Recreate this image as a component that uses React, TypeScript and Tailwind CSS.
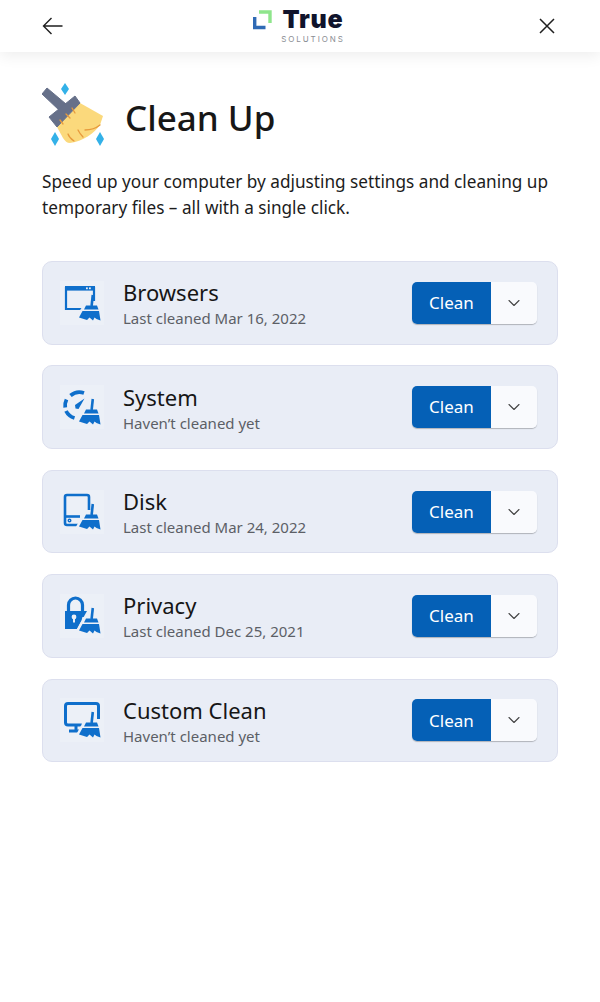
import React from "react";
import { ChevronDown } from "lucide-react";

const BLUE = "#0f6fcb";
const BG = "#ecf0f7";

function Broom() {
  const body = "M22.5 30 L39 30 L40.5 39.5 L36.5 38 L34.5 36.5 L33 39.5 L29.5 36.5 L27 39 L19 36.5 Z";
  return (
    <g>
      <path d={body} fill={BG} stroke={BG} strokeWidth="5" />
      <path d="M24 25 L38 25 L39 29 L23 29 Z" fill={BG} stroke={BG} strokeWidth="4" />
      <path d="M32.8 14 L31.6 25" stroke={BLUE} strokeWidth="2.6" />
      <path d="M26 24.5 L37 24.5 L38.5 28.5 L24 28.5 Z" fill={BLUE} />
      <path d={body} fill={BLUE} />
    </g>
  );
}

function CardIcon({ kind }: { kind: string }) {
  return (
    <svg width="44" height="44" viewBox="0 0 44 44" className="shrink-0">
      <rect width="44" height="44" fill={BG} />
      {kind === "browser" && (
        <g>
          <path d="M22 28 H6 V7 H34 V20" fill="none" stroke={BLUE} strokeWidth="2.2" />
          <rect x="5" y="5" width="30" height="4.6" fill={BLUE} />
          <rect x="26" y="6.4" width="1.8" height="1.8" fill={BG} />
          <rect x="29" y="6.4" width="1.8" height="1.8" fill={BG} />
        </g>
      )}
      {kind === "system" && (
        <g fill="none" stroke={BLUE} strokeWidth="3.8">
          <path d="M10.5 10.5 A14 14 0 0 1 24 8" />
          <path d="M6.5 14.5 A14 14 0 0 0 5.2 22.5" />
          <path d="M6 26 A14 14 0 0 0 14.5 33" />
          <path d="M15.5 23.5 L15 20 L24.5 13.5 L18.5 24 Z" fill={BLUE} stroke="none" />
        </g>
      )}
      {kind === "disk" && (
        <g fill="none" stroke={BLUE} strokeWidth="2.6">
          <path d="M22 35 H7 Q5 35 5 33 V7 Q5 5 7 5 H27 Q29 5 29 7 V20" />
          <path d="M5 26.5 H20" />
          <circle cx="9.5" cy="30.5" r="0.7" />
        </g>
      )}
      {kind === "privacy" && (
        <g>
          <path d="M8.5 18 V11 A7 7 0 0 1 22.5 11 V18" fill="none" stroke={BLUE} strokeWidth="3.2" />
          <path d="M5 17 H27 L17 35 H5 Z" fill={BLUE} />
          <circle cx="14" cy="23" r="2.4" fill={BG} />
          <path d="M13 24 H15 V28.5 H13 Z" fill={BG} />
        </g>
      )}
      {kind === "custom" && (
        <g fill="none" stroke={BLUE} strokeWidth="3">
          <path d="M22 27 H8 Q5.5 27 5.5 24.5 V8 Q5.5 5.5 8 5.5 H36 Q38.5 5.5 38.5 8 V21" />
          <path d="M9 33 H19 M16 27 V32" />
        </g>
      )}
      <Broom />
    </svg>
  );
}

function BroomHero() {
  return (
    <svg width="64" height="66" viewBox="0 0 64 66" className="shrink-0">
      <path d="M23 0 L27 6 L23 12 L19 6 Z" fill="#33b1e8" />
      <path d="M13 49 L17 56 L13 63 L9 56 Z" fill="#33b1e8" />
      <path d="M58 49 L62 56 L58 63 L54 56 Z" fill="#33b1e8" />
      <path d="M0 11 L5 5 L24 21 L18 28 Z" fill="#667089" stroke="#667089" strokeLinejoin="round" />
      <path d="M15 44 L38 20 L61 33 L58 42 C52 50 42 58 28 60 C25 60 23 58 21 55 Z" fill="#fbd97c" />
      <path d="M7 34 L33 13 L38 20 L15 44 Z" fill="#667089" stroke="#667089" strokeLinejoin="round" />
      <path d="M30 25 L33 30 M24 31 L28 35 M18 37 L21 41 M43 47 C48 47 53 46 58 42 M41 54 C39 52 38 51 36 47 M32 58 C29 56 27 54 26 51" stroke="#e79a3c" strokeWidth="1.3" fill="none" strokeLinecap="round" />
    </svg>
  );
}

function Logo() {
  return (
    <div className="flex items-start gap-[9px] pt-[8px] ml-[-4px]">
      <svg width="19" height="20" viewBox="0 0 19 20" className="mt-[2px]">
        <path d="M6 2 H17 V13" fill="none" stroke="#8fe58c" strokeWidth="3.4" />
        <path d="M1.7 7 V17.5 H12.5" fill="none" stroke="#2f6ab5" strokeWidth="3.4" />
      </svg>
      <div className="flex flex-col items-center">
        <span className="text-[25px] leading-[22px] font-black tracking-[0.8px] text-[#10142c]" style={{ fontFamily: '"Inter", sans-serif' }}>True</span>
        <span className="mt-[5px] text-[8px] leading-[8px] tracking-[1.9px] text-[#8a8d93]" style={{ fontFamily: '"Inter", sans-serif' }}>SOLUTIONS</span>
      </div>
    </div>
  );
}

const rows = [
  { kind: "browser", name: "Browsers", sub: "Last cleaned Mar 16, 2022" },
  { kind: "system", name: "System", sub: "Haven\u2019t cleaned yet" },
  { kind: "disk", name: "Disk", sub: "Last cleaned Mar 24, 2022" },
  { kind: "privacy", name: "Privacy", sub: "Last cleaned Dec 25, 2021" },
  { kind: "custom", name: "Custom Clean", sub: "Haven\u2019t cleaned yet" },
];

export default function App() {
  return (
    <div className="w-[600px] h-[1002px] bg-white overflow-hidden text-[#1a1a1a]" style={{ fontFamily: '"Noto Sans", sans-serif' }}>
      <header className="h-[52px] flex justify-between px-[42px] bg-white shadow-[0_4px_14px_rgba(0,0,0,0.07)]">
        <svg width="21" height="18" viewBox="0 0 21 18" className="mt-[17px]">
          <path d="M20.5 9 H1.5 M9.5 1 L1.5 9 L9.5 17" fill="none" stroke="#1f1f1f" strokeWidth="1.4" />
        </svg>
        <Logo />
        <svg width="16" height="16" viewBox="0 0 16 16" className="mt-[18px] mr-[3px]">
          <path d="M1 1 L15 15 M15 1 L1 15" fill="none" stroke="#1f1f1f" strokeWidth="1.5" />
        </svg>
      </header>
      <main className="px-[42px]">
        <div className="flex items-center gap-[19px] pt-[31px]">
          <BroomHero />
          <h1 className="pt-[4px] text-[35px] leading-[40px] font-medium text-[#171717]">Clean Up</h1>
        </div>
        <p className="mt-[20px] text-[17.2px] leading-[26px] text-[#1c1c1c]">
          Speed up your computer by adjusting settings and cleaning up temporary files – all with a single click.
        </p>
        <div className="mt-[40px] flex flex-col gap-[20.9px]">
          {rows.map((r) => (
            <div key={r.name} className="h-[83.5px] flex items-center rounded-[10px] bg-[#e9edf6] border border-[#dcdfee] pl-[17px] pr-[20px]">
              <CardIcon kind={r.kind} />
              <div className="ml-[19px] flex-1 pt-[1px]">
                <div className="text-[22px] leading-[28px] text-[#161616]">{r.name}</div>
                <div className="mt-[2px] text-[15px] leading-[20px] text-[#5c5f66]">{r.sub}</div>
              </div>
              <div className="flex h-[42px] w-[125px] rounded-[5px] overflow-hidden shadow-[0_1px_1px_rgba(0,0,0,0.25)]">
                <button className="w-[79px] bg-[#0560b6] text-white text-[17px]">Clean</button>
                <div className="flex-1 bg-[#f9fafd] flex items-center justify-center">
                  <ChevronDown size={20} strokeWidth={1.3} className="text-[#444]" />
                </div>
              </div>
            </div>
          ))}
        </div>
      </main>
    </div>
  );
}
